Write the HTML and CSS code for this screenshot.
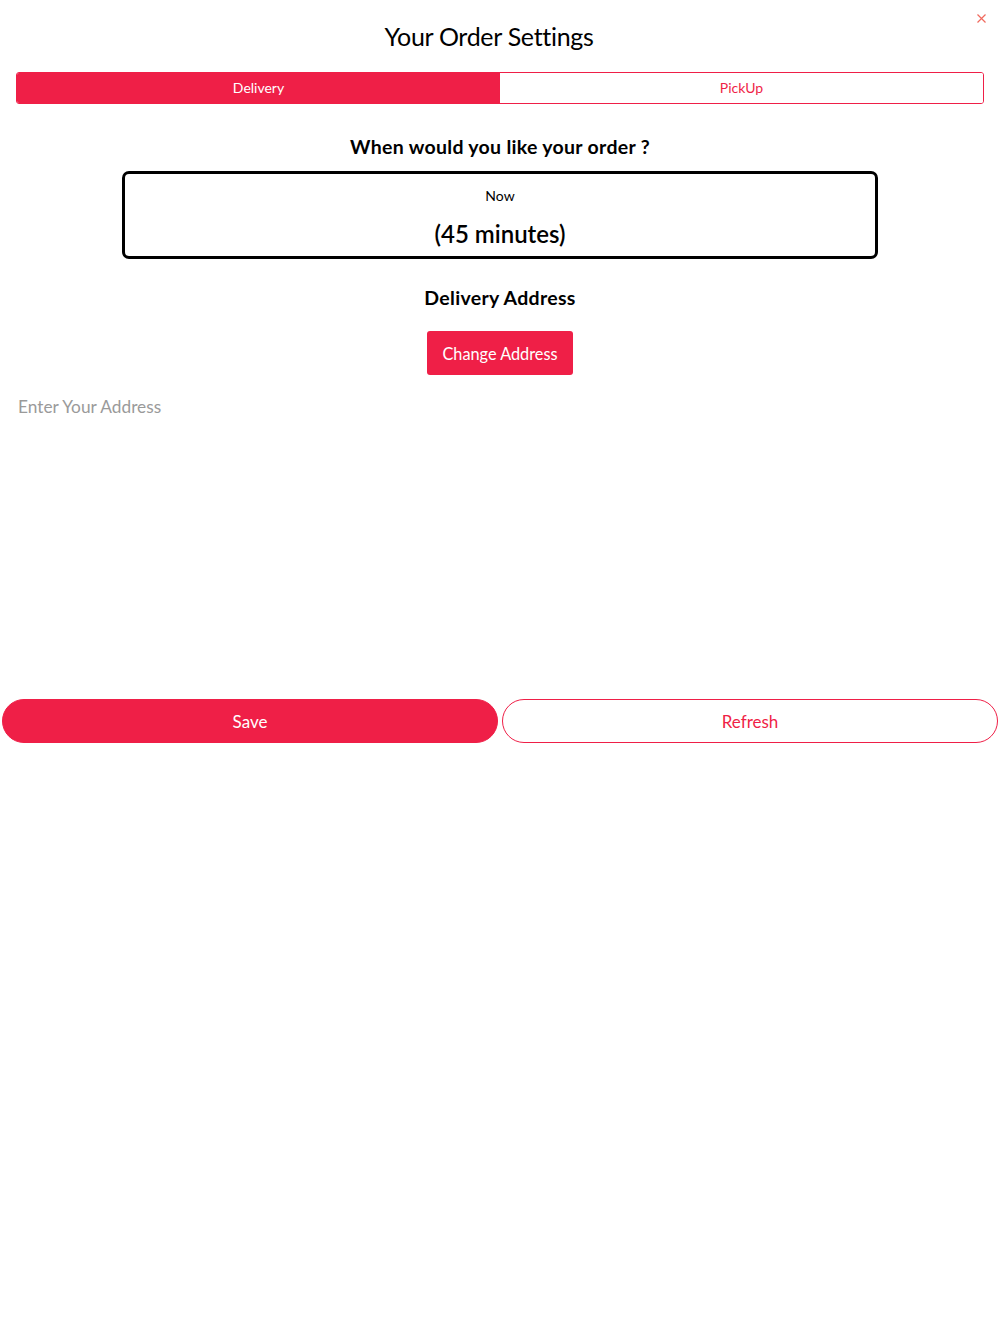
FILE: index.html
```html
<!DOCTYPE html>
<html>
<head>
<meta charset="utf-8">
<link rel="stylesheet" href="styles.css">
</head>
<body>
<div class="page">
  <header class="head">
    <h1 class="title">Your Order Settings</h1>
    <button class="close" aria-label="close">
      <svg width="9" height="9" viewBox="0 0 9 9"><path d="M0.5 0.5L8.5 8.5M8.5 0.5L0.5 8.5" stroke="#f06a5e" stroke-width="1.2"/></svg>
    </button>
  </header>
  <div class="tabs">
    <div class="tab active">Delivery</div>
    <div class="tab">PickUp</div>
  </div>
  <h2 class="q">When would you like your order ?</h2>
  <div class="timebox">
    <div class="now">Now</div>
    <div class="mins">(45 minutes)</div>
  </div>
  <h2 class="addr-title">Delivery Address</h2>
  <div class="change-wrap"><button class="change">Change Address</button></div>
  <input class="addr" type="text" placeholder="Enter Your Address">
  <div class="actions">
    <button class="btn save">Save</button>
    <button class="btn refresh">Refresh</button>
  </div>
</div>
</body>
</html>
```
FILE: styles.css
```css
* { box-sizing: border-box; }
body { margin: 0; background: #fff; font-family: Lato, "Open Sans", sans-serif; color: #000; }
.page { width: 1000px; }
.head { position: relative; height: 72px; display: flex; justify-content: center; }
.title { margin: 0; padding-top: 20px; font-size: 25px; font-weight: 400; line-height: 32px; padding-right: 22px; letter-spacing: -0.3px; }
.close { position: absolute; right: 14px; top: 14px; background: none; border: 0; padding: 0; width: 9px; height: 9px; display: block; }
.close svg { display: block; }
.tabs { margin: 0 16px; display: flex; height: 32px; border: 1px solid #ef1f47; border-radius: 3px; overflow: hidden; }
.tab { flex: 1; display: flex; align-items: center; justify-content: center; font-size: 14px; line-height: 16px; color: #ef1f47; background: #fff; }
.tab.active { background: #ef1f47; color: #fff; }
.q { margin: 31px 0 0; text-align: center; font-size: 19.5px; font-weight: 700; line-height: 24px; letter-spacing: 0.3px; }
.timebox { margin: 12px auto 0; width: 756px; height: 88px; border: 3px solid #000; border-radius: 7px; text-align: center; }
.now { font-size: 14px; margin-top: 13px; line-height: 18px; }
.mins { font-size: 24px; font-weight: 600; line-height: 30px; margin-top: 14px; }
.addr-title { margin: 27px 0 0; text-align: center; font-size: 19.5px; font-weight: 700; line-height: 24px; letter-spacing: 0.3px; }
.change-wrap { display: flex; justify-content: center; margin-top: 21px; }
.change { background: #ef1f47; color: #fff; border: 0; border-radius: 3px; height: 44px; width: 146px; font-family: inherit; font-size: 16.3px; padding: 0; }
.addr { display: block; margin: 20px 0 0 18px; width: 600px; border: 0; outline: none; font-family: inherit; font-size: 17.3px; line-height: 24px; padding: 0; color: #000; }
.addr::placeholder { color: #9a9a9a; }
.actions { margin-top: 280px; display: flex; gap: 4px; padding: 0 2px; }
.btn { flex: 1; height: 44px; border-radius: 22px; font-family: inherit; font-size: 17px; }
.save { background: #ef1f47; color: #fff; border: 1px solid #ef1f47; }
.refresh { background: #fff; color: #ef1f47; border: 1px solid #ef1f47; }
```
